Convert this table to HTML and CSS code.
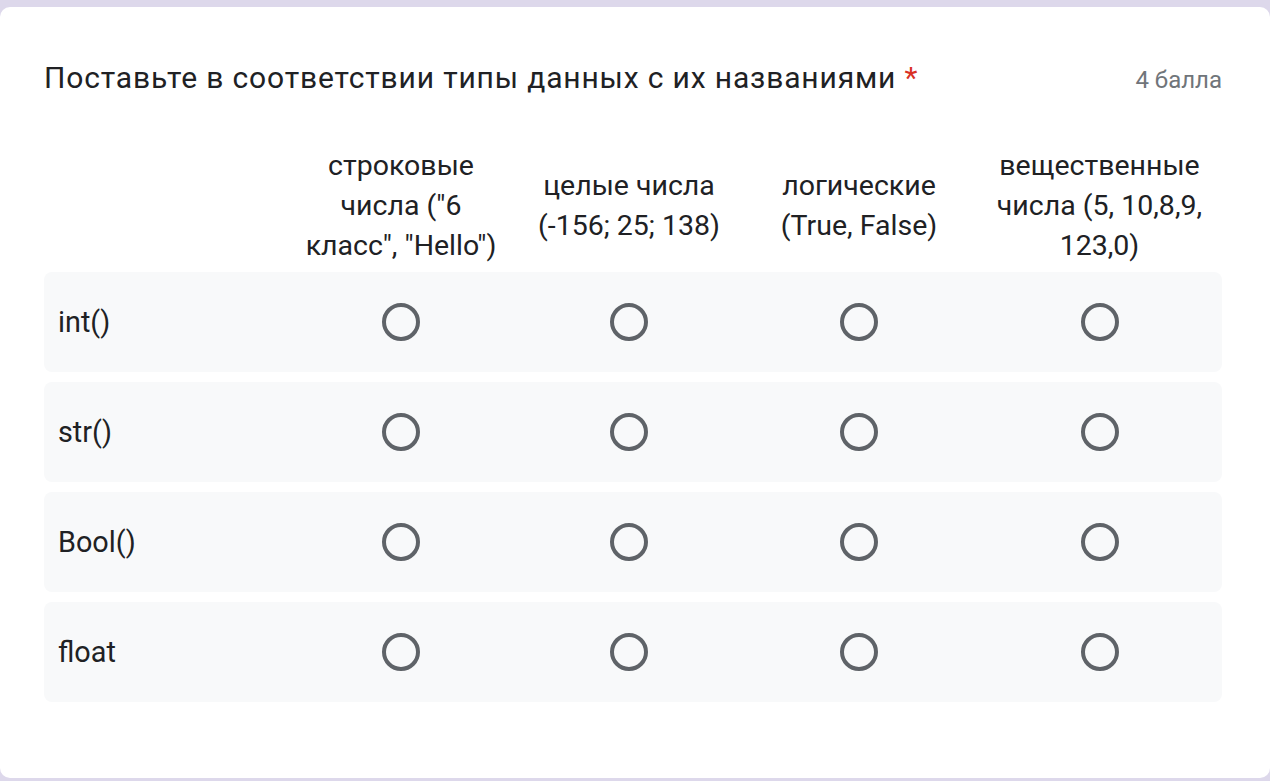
FILE: index.html
```html
<!DOCTYPE html>
<html lang="ru">
<head>
<meta charset="utf-8">
<link rel="stylesheet" href="styles.css">
</head>
<body>
<div class="card">
  <div class="head">
    <div class="title">Поставьте в соответствии типы данных с их названиями <span class="req">*</span></div>
    <div class="points">4 балла</div>
  </div>
  <div class="grid hdr">
    <div></div>
    <div class="col">строковые<br>числа ("6<br>класс", "Hello")</div>
    <div class="col">целые числа<br>(-156; 25; 138)</div>
    <div class="col">логические<br>(True, False)</div>
    <div class="col">вещественные<br>числа (5, 10,8,9,<br>123,0)</div>
  </div>
  <div class="grid row">
    <div class="label">int()</div>
    <div class="cell"><span class="radio"></span></div>
    <div class="cell"><span class="radio"></span></div>
    <div class="cell"><span class="radio"></span></div>
    <div class="cell"><span class="radio"></span></div>
  </div>
  <div class="grid row">
    <div class="label">str()</div>
    <div class="cell"><span class="radio"></span></div>
    <div class="cell"><span class="radio"></span></div>
    <div class="cell"><span class="radio"></span></div>
    <div class="cell"><span class="radio"></span></div>
  </div>
  <div class="grid row">
    <div class="label">Bool()</div>
    <div class="cell"><span class="radio"></span></div>
    <div class="cell"><span class="radio"></span></div>
    <div class="cell"><span class="radio"></span></div>
    <div class="cell"><span class="radio"></span></div>
  </div>
  <div class="grid row">
    <div class="label">float</div>
    <div class="cell"><span class="radio"></span></div>
    <div class="cell"><span class="radio"></span></div>
    <div class="cell"><span class="radio"></span></div>
    <div class="cell"><span class="radio"></span></div>
  </div>
</div>
</body>
</html>
```
FILE: styles.css
```css
html, body {
  margin: 0;
  padding: 0;
}
body {
  background: #ddd8eb;
  padding-top: 7px;
  height: 774px;
  overflow: hidden;
  font-family: Roboto, "Noto Sans", sans-serif;
  color: #202124;
}
.card {
  background: #fff;
  border-radius: 10px;
  height: 771px;
  box-sizing: border-box;
  padding: 51px 48px 0 44px;
}
.head {
  display: flex;
  justify-content: space-between;
  align-items: baseline;
}
.title {
  font-size: 30px;
  line-height: 40px;
  letter-spacing: 0.85px;
  color: #202124;
}
.req {
  color: #d93025;
}
.points {
  font-size: 24px;
  color: #70757a;
}
.grid {
  display: grid;
  grid-template-columns: 241px 232px 224px 236px 245px;
}
.hdr {
  margin-top: 48px;
  height: 120px;
  align-items: center;
  margin-bottom: 6px;
}
.col {
  text-align: center;
  font-size: 28.5px;
  line-height: 40px;
}
.row {
  background: #f8f9fa;
  border-radius: 8px;
  height: 100px;
  align-items: center;
  margin-bottom: 10px;
}
.label {
  padding-left: 14px;
  font-size: 28.8px;
}
.cell {
  display: flex;
  justify-content: center;
}
.radio {
  width: 38px;
  height: 38px;
  box-sizing: border-box;
  border: 4px solid #5f6368;
  border-radius: 50%;
}
```
